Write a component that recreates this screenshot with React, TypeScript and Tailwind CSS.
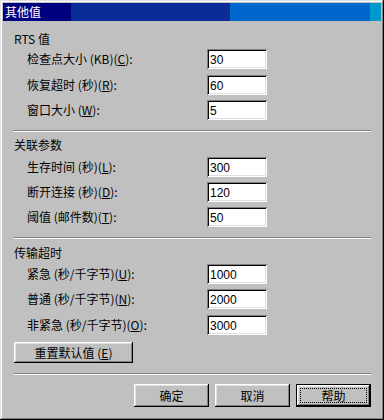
import type { ReactNode } from 'react';

const CJK = "font-['Noto_Sans_CJK_SC',sans-serif]";

const RAISED =
  'shadow-[inset_-1px_-1px_#000,inset_1px_1px_#fff,inset_-2px_-2px_#808080,inset_2px_2px_#dfdfdf]';

function Field({ value }: { value: string }) {
  return (
    <input
      readOnly
      defaultValue={value}
      className="h-[20px] w-[60px] bg-white pl-[3px] pt-[1px] font-['Liberation_Sans',sans-serif] text-[12px] text-black outline-none shadow-[inset_1px_1px_#808080,inset_-1px_-1px_#fff,inset_2px_2px_#000,inset_-2px_-2px_#dfdfdf]"
    />
  );
}

function Row({ label, value, className = '' }: { label: ReactNode; value: string; className?: string }) {
  return (
    <div className={`flex h-[20px] items-center ${className}`}>
      <span className="w-[193px] pl-[13px] text-[12px] leading-[12px]">{label}</span>
      <Field value={value} />
    </div>
  );
}

function Heading({ children, className = '' }: { children: ReactNode; className?: string }) {
  return <div className={`h-[12px] text-[12px] leading-[12px] ${className}`}>{children}</div>;
}

function Separator({ className = '' }: { className?: string }) {
  return <div className={`h-[2px] border-t border-b border-t-[#808080] border-b-white ${className}`} />;
}

// mnemonic letter, drawn as "(X)" with the letter underlined
function Key({ k }: { k: string }) {
  return (
    <>
      (<u>{k}</u>)
    </>
  );
}

function Button({ children, primary = false }: { children: ReactNode; primary?: boolean }) {
  if (primary) {
    return (
      <button
        type="button"
        className="h-[23px] w-[75px] border border-black bg-[#c0c0c0] p-0 text-[12px]"
      >
        <div className={`flex h-full w-full items-center justify-center p-[3px] ${RAISED}`}>
          <div className="flex h-full w-full items-center justify-center border border-dotted border-black">
            {children}
          </div>
        </div>
      </button>
    );
  }
  return (
    <button
      type="button"
      className={`flex h-[23px] w-[75px] items-center justify-center bg-[#c0c0c0] text-[12px] ${RAISED}`}
    >
      {children}
    </button>
  );
}

export default function App() {
  return (
    <div
      className={`flex h-[420px] w-[384px] flex-col bg-[#c0c0c0] p-[3px] text-black ${CJK} shadow-[inset_-1px_-1px_#000,inset_1px_1px_#dfdfdf,inset_-2px_-2px_#808080,inset_2px_2px_#fff]`}
    >
      <div className="flex h-[18px] items-center bg-[linear-gradient(90deg,#00007f_0_18%,#0a2c96_18%_60%,#0068cc_60%_97%,#0099cc_97%)] pl-[2px] text-[12px] leading-[12px] text-white">
        其他值
      </div>

      <div className="flex flex-col pl-[11px] pr-[10px]">
        <Heading className="mt-[12px]">RTS 值</Heading>
        <Row className="mt-[4px]" label={<>检查点大小 (KB)<Key k="C" />:</>} value="30" />
        <Row className="mt-[6px]" label={<>恢复超时 (秒)<Key k="R" />:</>} value="60" />
        <Row className="mt-[5px]" label={<>窗口大小 <Key k="W" />:</>} value="5" />
        <Separator className="mt-[10px]" />

        <Heading className="mt-[7px]">关联参数</Heading>
        <Row className="mt-[6px]" label={<>生存时间 (秒)<Key k="L" />:</>} value="300" />
        <Row className="mt-[5px]" label={<>断开连接 (秒)<Key k="D" />:</>} value="120" />
        <Row className="mt-[5px]" label={<>阈值 (邮件数)<Key k="T" />:</>} value="50" />
        <Separator className="mt-[10px]" />

        <Heading className="mt-[8px]">传输超时</Heading>
        <Row className="mt-[5px]" label={<>紧急 (秒/千字节)<Key k="U" />:</>} value="1000" />
        <Row className="mt-[5px]" label={<>普通 (秒/千字节)<Key k="N" />:</>} value="2000" />
        <Row className="mt-[6px]" label={<>非紧急 (秒/千字节)<Key k="O" />:</>} value="3000" />

        <button
          type="button"
          className={`mt-[7px] flex h-[21px] w-[119px] items-center justify-center bg-[#c0c0c0] text-[12px] ${RAISED}`}
        >
          重置默认值 <Key k="E" />
        </button>

        <Separator className="mt-[10px]" />

        <div className="mt-[9px] flex justify-end gap-[6px]">
          <Button>确定</Button>
          <Button>取消</Button>
          <Button primary>帮助</Button>
        </div>
      </div>
    </div>
  );
}
